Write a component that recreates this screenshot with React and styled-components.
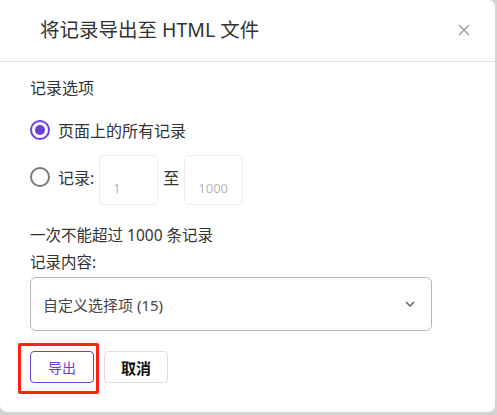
import React from 'react';
import styled, { createGlobalStyle } from 'styled-components';

const GlobalStyle = createGlobalStyle`
  html, body {
    margin: 0;
    padding: 0;
    background: #d4d4d4;
  }
  body {
    font-family: "Noto Sans", "Noto Sans CJK SC", sans-serif;
    color: #333;
  }
`;

const Dialog = styled.div`
  width: 495px;
  height: 412px;
  background: #fff;
  border-radius: 0 7px 7px 7px;
  display: flex;
  flex-direction: column;
  overflow: hidden;
`;

const Header = styled.div`
  flex: none;
  display: flex;
  align-items: center;
  justify-content: space-between;
  padding: 0 24px 0 40px;
  border-bottom: 1px solid #e2e2e2;
  box-sizing: border-box;
  height: 62px;
`;

const Title = styled.h2`
  margin: 0;
  font-size: 19.5px;
  font-weight: 400;
  color: #333;
  line-height: 28px;
  margin-top: -2px;
`;

const CloseButton = styled.button`
  border: none;
  background: none;
  padding: 0;
  width: 14px;
  height: 14px;
  display: flex;
  align-items: center;
  justify-content: center;
  cursor: pointer;
  margin-top: -2px;
`;

const Body = styled.div`
  padding: 16px 30px 0 30px;
  display: flex;
  flex-direction: column;
`;

const Text = styled.div`
  font-size: ${p => p.size || 15}px;
  line-height: 20px;
  color: #333;
  margin-top: ${p => p.mt || 0}px;
`;

const RadioRow = styled.label`
  display: flex;
  align-items: center;
  gap: 8px;
  height: ${p => p.h || 24}px;
  margin-top: ${p => p.mt || 0}px;
  font-size: 16px;
  color: #333;
`;

const RadioCircle = styled.span`
  width: 20px;
  height: 20px;
  box-sizing: border-box;
  border-radius: 50%;
  border: 2px solid ${p => (p.checked ? '#6a3ed8' : '#7a7a7a')};
  display: flex;
  align-items: center;
  justify-content: center;
  flex: none;
  margin-top: ${p => p.mt || 0}px;
  &::after {
    content: '';
    width: 10px;
    height: 10px;
    border-radius: 50%;
    background: #6a3ed8;
    display: ${p => (p.checked ? 'block' : 'none')};
  }
`;

const Range = styled.span`
  display: flex;
  align-items: center;
  gap: 5px;
`;

const RangeLabel = styled.span`
  font-size: 16px;
  margin-top: -6px;
`;

const NumberBox = styled.div`
  width: 59px;
  height: 50px;
  box-sizing: border-box;
  border: 1px solid #ececec;
  border-radius: 4px;
  padding: 22px 0 0 13px;
  font-size: 13px;
  line-height: 20px;
  color: #b8b8b8;
`;

const Select = styled.div`
  margin-top: 5px;
  width: 402px;
  height: 54px;
  box-sizing: border-box;
  border: 1px solid #b8b8b8;
  border-radius: 6px;
  display: flex;
  align-items: center;
  justify-content: space-between;
  padding: 0 16px 0 12px;
  font-size: 15px;
  color: #444;
`;

const Footer = styled.div`
  margin-top: 20px;
  display: flex;
  gap: 10px;
`;

const Highlight = styled.div`
  position: relative;
  &::before {
    content: '';
    position: absolute;
    left: -12px;
    top: -8px;
    right: -5px;
    bottom: -11px;
    border: 3px solid #ff2214;
    border-radius: 2px;
    pointer-events: none;
  }
`;

const Button = styled.button`
  width: 64px;
  height: 32px;
  box-sizing: border-box;
  border-radius: 4px;
  background: #fff;
  font-family: inherit;
  font-size: ${p => (p.primary ? 14 : 15)}px;
  font-weight: ${p => (p.primary ? 400 : 700)};
  color: ${p => (p.primary ? '#6a3ed8' : '#111')};
  border: 1px solid ${p => (p.primary ? '#6a3ed8' : '#dedede')};
  padding: 0;
  cursor: pointer;
`;

const CloseIcon = () => (
  <svg width="12" height="12" viewBox="0 0 12 12">
    <path d="M1 1 L11 11 M11 1 L1 11" stroke="#9a9a9a" strokeWidth="1.3" fill="none" />
  </svg>
);

const Chevron = () => (
  <svg width="10" height="6" viewBox="0 0 10 6">
    <path d="M1 1 L5 5 L9 1" stroke="#666" strokeWidth="1.5" fill="none" />
  </svg>
);

export default function App() {
  return (
    <>
      <GlobalStyle />
      <Dialog>
        <Header>
          <Title>将记录导出至 HTML 文件</Title>
          <CloseButton aria-label="close"><CloseIcon /></CloseButton>
        </Header>
        <Body>
          <Text size={16}>记录选项</Text>
          <RadioRow mt={20}>
            <RadioCircle checked />
            页面上的所有记录
          </RadioRow>
          <RadioRow h={50} mt={13}>
            <RadioCircle mt={-6} />
            <Range>
              <RangeLabel>记录:</RangeLabel>
              <NumberBox>1</NumberBox>
              <RangeLabel>至</RangeLabel>
              <NumberBox>1000</NumberBox>
            </Range>
          </RadioRow>
          <Text size={15.5} mt={20}>一次不能超过 1000 条记录</Text>
          <Text size={15.5} mt={7}>记录内容:</Text>
          <Select>
            <span>自定义选择项 (15)</span>
            <Chevron />
          </Select>
          <Footer>
            <Highlight>
              <Button primary>导出</Button>
            </Highlight>
            <Button>取消</Button>
          </Footer>
        </Body>
      </Dialog>
    </>
  );
}
